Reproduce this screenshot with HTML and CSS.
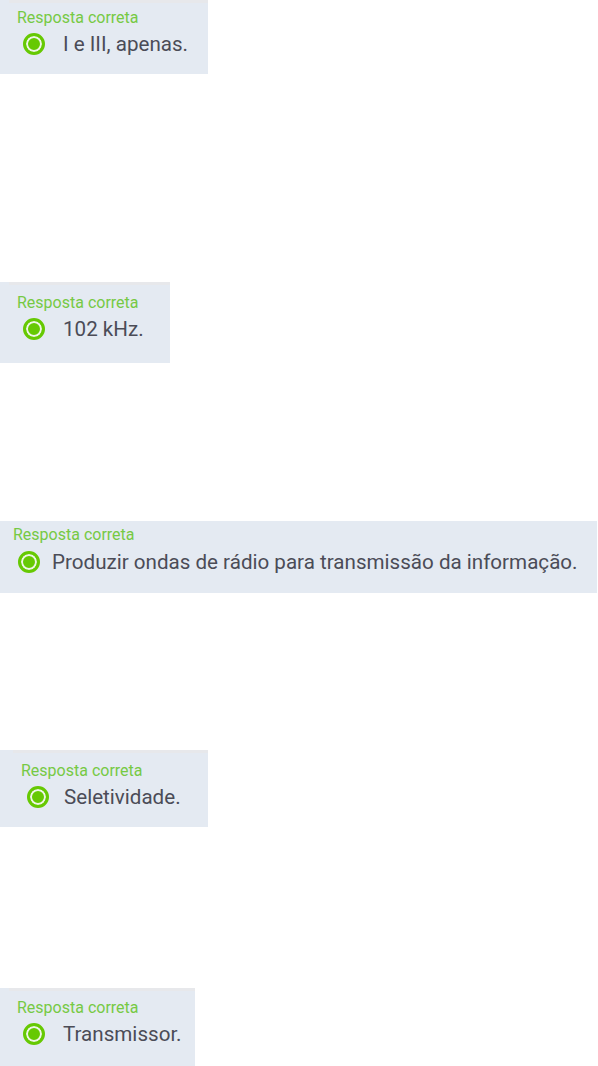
FILE: index.html
```html
<!DOCTYPE html>
<html lang="pt-BR">
<head>
  <meta charset="UTF-8" />
  <title>Respostas corretas</title>
  <link rel="stylesheet" href="styles.css">
</head>
<body>

  <div class="answer answer-1">
    <div class="answer-bar"></div>
    <div class="answer-label">Resposta correta</div>
    <div class="answer-row">
      <span class="radio"></span>
      <span class="answer-text">I e III, apenas.</span>
    </div>
  </div>

  <div class="answer answer-2">
    <div class="answer-bar"></div>
    <div class="answer-label">Resposta correta</div>
    <div class="answer-row">
      <span class="radio"></span>
      <span class="answer-text">102 kHz.</span>
    </div>
  </div>

  <div class="answer answer-3">
    <div class="answer-label">Resposta correta</div>
    <div class="answer-row">
      <span class="radio"></span>
      <span class="answer-text">Produzir ondas de rádio para transmissão da informação.</span>
    </div>
  </div>

  <div class="answer answer-4">
    <div class="answer-bar"></div>
    <div class="answer-label">Resposta correta</div>
    <div class="answer-row">
      <span class="radio"></span>
      <span class="answer-text">Seletividade.</span>
    </div>
  </div>

  <div class="answer answer-5">
    <div class="answer-bar"></div>
    <div class="answer-label">Resposta correta</div>
    <div class="answer-row">
      <span class="radio"></span>
      <span class="answer-text">Transmissor.</span>
    </div>
  </div>

</body>
</html>
```

FILE: styles.css
```css
body {
  margin: 0;
  font-family: Roboto, "Liberation Sans", sans-serif;
  background: #fff;
}
.answer {
  background-color: #e4eaf2;
  box-sizing: border-box;
  padding-left: 17px;
  overflow: hidden;
}
.answer-bar {
  height: 3px;
  margin-left: -8px;
  background: #e7e8eb;
}
.answer-label {
  color: #76c944;
  font-size: 16px;
  line-height: 20px;
  margin-top: 5px;
}
.answer-row {
  display: flex;
  align-items: center;
  gap: 18px;
  height: 24px;
  margin-top: 4px;
  padding-left: 6px;
}
.radio {
  width: 22px;
  height: 22px;
  border-radius: 50%;
  background: #66c903;
  box-sizing: border-box;
  border: 3px solid #66c903;
  box-shadow: inset 0 0 0 2px #eef6e6;
  flex-shrink: 0;
}
.answer-text {
  color: #4b4c57;
  font-size: 20.6px;
  line-height: 24px;
  white-space: nowrap;
}

.answer-1 { width: 208px; height: 74px; }
.answer-2 { width: 170px; height: 81px; margin-top: 208px; }
.answer-2 .answer-label { margin-top: 8px; }
.answer-3 { width: 597px; height: 72px; margin-top: 158px; padding-left: 13px; }
.answer-3 .answer-label { margin-top: 4px; }
.answer-3 .answer-row { padding-left: 5px; gap: 12px; margin-top: 5px; }
.answer-4 { width: 208px; height: 77px; margin-top: 157px; padding-left: 21px; }
.answer-4 .answer-label { margin-top: 8px; }
.answer-4 .answer-row { gap: 15px; }
.answer-5 { width: 195px; height: 78px; margin-top: 161px; }
.answer-5 .answer-label { margin-top: 7px; }
```
